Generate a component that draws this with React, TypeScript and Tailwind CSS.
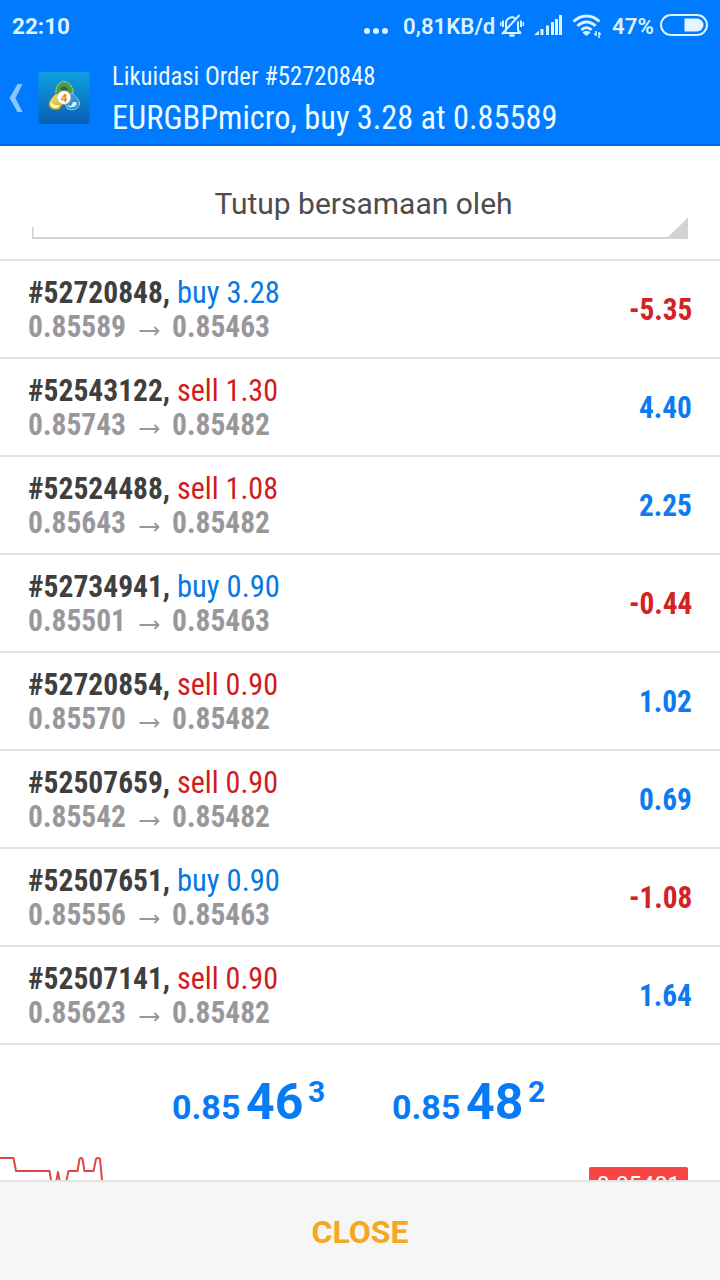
import React from 'react';
import clsx from 'clsx';

interface Order {
  id: string;
  side: 'buy' | 'sell';
  volume: string;
  open: string;
  current: string;
  profit: string;
}

const orders: Order[] = [
  { id: '52720848', side: 'buy', volume: '3.28', open: '0.85589', current: '0.85463', profit: '-5.35' },
  { id: '52543122', side: 'sell', volume: '1.30', open: '0.85743', current: '0.85482', profit: '4.40' },
  { id: '52524488', side: 'sell', volume: '1.08', open: '0.85643', current: '0.85482', profit: '2.25' },
  { id: '52734941', side: 'buy', volume: '0.90', open: '0.85501', current: '0.85463', profit: '-0.44' },
  { id: '52720854', side: 'sell', volume: '0.90', open: '0.85570', current: '0.85482', profit: '1.02' },
  { id: '52507659', side: 'sell', volume: '0.90', open: '0.85542', current: '0.85482', profit: '0.69' },
  { id: '52507651', side: 'buy', volume: '0.90', open: '0.85556', current: '0.85463', profit: '-1.08' },
  { id: '52507141', side: 'sell', volume: '0.90', open: '0.85623', current: '0.85482', profit: '1.64' },
];

const StatusBar = () => (
  <div className="flex h-[52px] items-center pl-3 text-[#dcf3ff]">
    <span className="mt-0.5 w-[352px] text-[22.500px] font-bold">22:10</span>
    <svg width="24" height="6" viewBox="0 0 24 6" className="mt-2.5 shrink-0" fill="currentColor">
      <circle cx="3" cy="3" r="3" />
      <circle cx="12" cy="3" r="3" />
      <circle cx="21" cy="3" r="3" />
    </svg>
    <span className="mt-0.5 ml-[15px] w-[96px] text-[22.200px] font-semibold whitespace-nowrap">0,81KB/d</span>
    {/* muted bell */}
    <svg width="26" height="26" viewBox="0 0 26 26" className="shrink-0" fill="none" stroke="currentColor" strokeWidth="2">
      <path d="M7 18.500V10.500a6 6 0 0 1 9-5.300M19 8.500v10M4 20h18M7 17.500l-3 2.500M19 17.500l3 2.500M20.500 2L3 21" />
      <path d="M10.500 22.500h5" strokeWidth="2.500" />
      <path d="M4 7.500v6.500M22 7.500v6.500" strokeWidth="2" />
      <path d="M1.800 9v4M24.300 9v4" strokeWidth="1.500" />
    </svg>
    <svg width="28" height="20" viewBox="0 0 28 20" className="-mt-0.5 ml-[9px] shrink-0" fill="currentColor">
      <path d="M0 20L5 15.500V20zM6.500 14h3v6h-3zM12 10.500h3V20h-3zM17 7h3v13h-3zM21 4h3v16h-3zM25 0H28v20h-3z" />
    </svg>
    <svg width="30" height="24" viewBox="0 0 30 24" className="ml-[10px] shrink-0" fill="none" stroke="currentColor" strokeWidth="3">
      <path d="M1.500 7.500C9 0 20 0 27.500 7.500M5.500 12C11 6.500 18 6.500 23.500 12M9.500 16C12.500 13 16.500 13 19.500 16" />
      <path d="M10.500 18.500a5.500 5.500 0 0 1 8 0L14.500 22z" fill="currentColor" stroke="none" />
      <path d="M24 17v5M27 18v6" strokeWidth="1.500" />
      <path d="M22 20h2M27 20h2" strokeWidth="1.500" />
    </svg>
    <span className="mt-0.5 ml-[10px] w-[47px] text-[22.300px] font-semibold whitespace-nowrap">47%</span>
    <svg width="48" height="22" viewBox="0 0 48 22" className="-mt-[3px] ml-px shrink-0">
      <rect x="1" y="1" width="46" height="20" rx="10" fill="none" stroke="currentColor" strokeWidth="2" />
      <path d="M24.500 4.500H37a6.500 6.500 0 0 1 0 13H24.500z" fill="#e6f5ff" />
    </svg>
  </div>
);

const AppLogo = () => (
  <svg width="52" height="54" viewBox="0 0 52 54" className="shrink-0">
    <defs>
      <linearGradient id="tile" x1="0" y1="0" x2="0" y2="1">
        <stop offset="0" stopColor="#0fa0e0" />
        <stop offset="1" stopColor="#0760b4" />
      </linearGradient>
      <linearGradient id="yellow" x1="0" y1="0" x2="1" y2="1">
        <stop offset="0" stopColor="#f6ec8e" />
        <stop offset="1" stopColor="#c89c1c" />
      </linearGradient>
    </defs>
    <rect x="0.500" y="1" width="51" height="52" rx="3" fill="url(#tile)" />
    <path d="M18 24C17 16 21 10.500 26 10.500S36 16 35 24L30 29h-8z" fill="#4c9a50" stroke="#9ccf86" strokeWidth="1" />
    <path d="M22.500 17.500q3.500-4 7.500 0l-1.500 3h-4.500z" fill="#26693a" />
    <path d="M18 22c-2 3-6 6-7 10-1 6 5 8 11 6l5-9z" fill="url(#yellow)" stroke="#7d7430" strokeWidth="0.800" />
    <path d="M12 31l5 3h5l-2 3c-4 1-8-1-8-6z" fill="#fff3a8" />
    <path d="M34 22c3 3 7 6 7.500 10 0 6-6 8-12 6l-4-8z" fill="#3791d2" stroke="#8ed0f2" strokeWidth="1" />
    <path d="M29 34l4 1 2-4 3 0c2 3-1 6-7 5z" fill="#d4f1ff" />
    <circle cx="26" cy="26.500" r="6.800" fill="#fffaf2" stroke="#c8bfa8" strokeWidth="0.600" />
    <text x="26" y="30.500" textAnchor="middle" fontSize="11.500" fontWeight="700" fill="#ec7b38">4</text>
  </svg>
);

const Header = () => (
  <header className="h-[146px] border-b-2 border-[#0069e0] bg-[#007aff]">
    <StatusBar />
    <div className="flex h-[92px] items-start">
      <svg width="14" height="28" viewBox="0 0 14 28" className="mt-8 ml-[8.500px] shrink-0">
        <path d="M8.500 0H13.500L6.500 14L13.500 28H8.500L0.500 14z" fill="#8ac6ff" />
      </svg>
      <div className="mt-[19px] ml-[15px]">
        <AppLogo />
      </div>
      <div className="ml-[22px] origin-left scale-x-[0.951] font-['Roboto_Condensed'] whitespace-nowrap text-[#eefaff]">
        <p className="mt-[8px] text-[26px] leading-8">Likuidasi Order #52720848</p>
        <p className="mt-[5px] text-[34px] leading-10">EURGBPmicro, buy 3.28 at 0.85589</p>
      </div>
    </div>
  </header>
);

const Selector = () => (
  <div className="h-[115px] border-b-2 border-[#e2e2e2] px-8 pt-9">
    <div className="relative h-[57px] text-center text-[30px] leading-[44px] text-[#4d4d4d]">
      <span className="ml-[7px]">Tutup bersamaan oleh</span>
      <svg width="656" height="22" viewBox="0 0 656 22" className="absolute bottom-0 left-0">
        <path d="M0 10h1.500v10H636L656 0.500V22H0z" fill="#d2d2d2" />
      </svg>
    </div>
  </div>
);

const OrderRow = ({ order }: { order: Order }) => (
  <li className="flex h-[98px] items-center justify-between border-b-2 border-[#e2e2e2] px-7 font-['Roboto_Condensed'] text-[32px] leading-[34px]">
    <div className="whitespace-nowrap">
      <p className="flex">
        <span className="w-[149px] origin-left scale-x-[0.922] font-bold text-[#3f3f3f]">#{order.id},</span>
        <span
          className={clsx(
            'origin-left',
            order.side === 'buy' ? 'scale-x-[0.955] text-[#0878e4]' : 'scale-x-[0.94] text-[#d01c1c]'
          )}
        >
          {order.side} {order.volume}
        </span>
      </p>
      <p className="flex items-center font-bold text-[#98989c]">
        <span className="w-[111px] origin-left scale-x-[0.922]">{order.open}</span>
        <svg width="21" height="12" viewBox="0 0 21 12" className="mt-2.5 mr-3" fill="none" stroke="currentColor" strokeWidth="1.800">
          <path d="M0.500 6h19M15.500 2L19.500 6L15.500 10" />
        </svg>
        <span className="origin-left scale-x-[0.922]">{order.current}</span>
      </p>
    </div>
    <span
      className={clsx(
        'origin-right scale-x-[0.915] font-bold',
        order.profit.startsWith('-') ? 'text-[#d32222]' : 'text-[#0c7af0]'
      )}
    >
      {order.profit}
    </span>
  </li>
);

const Quote = ({ base, pips, point }: { base: string; pips: string; point: string }) => (
  <div className="flex w-[220px] items-baseline font-bold text-[#087af5]">
    <span className="w-[74px] text-[34px]">{base}</span>
    <span className="w-[62px] text-[50px]">{pips}</span>
    <span className="relative -top-[17px] text-[30px]">{point}</span>
  </div>
);

const Chart = () => (
  <div className="flex h-[26px] items-start justify-between overflow-hidden pr-8">
    <svg width="104" height="26" viewBox="0 0 104 26" fill="none" stroke="#e04646" strokeWidth="2" strokeLinejoin="round">
      <path d="M0 4H13.500L16 17H49.500L51 26M56.500 26L58 18L59.500 26M66.500 26L68.500 17H77.500L79.500 5Q81 3 82.500 5L84.500 17H93.500L96 5Q98 3 100 5L102 26" />
    </svg>
    <div className="mt-[13px] h-[30px] w-[99px] rounded-xs bg-[#f94444] text-center text-[23px] leading-[37px] text-white">
      0.85481
    </div>
  </div>
);

const App: React.FC = () => {
  return (
    <div className="flex h-[1280px] w-[720px] flex-col overflow-hidden bg-white font-[Roboto,sans-serif]">
      <Header />
      <Selector />
      <ul>
        {orders.map((o) => (
          <OrderRow key={o.id} order={o} />
        ))}
      </ul>
      <div className="flex h-[109px] pt-5 pl-[172px]">
        <Quote base="0.85" pips="46" point="3" />
        <Quote base="0.85" pips="48" point="2" />
      </div>
      <Chart />
      <button className="flex-1 border-t-2 border-[#e2e2e2] bg-[#f6f6f6] pt-0.5 text-[32px] font-bold text-[#f5a623]">
        CLOSE
      </button>
    </div>
  );
};

export default App;
